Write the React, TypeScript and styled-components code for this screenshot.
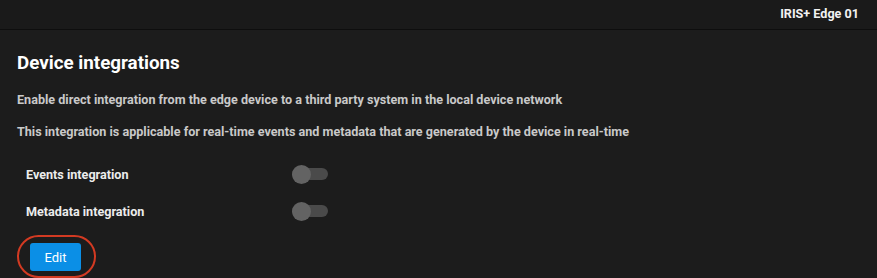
import React from "react";
import styled, { createGlobalStyle } from "styled-components";

const Global = createGlobalStyle`
  html, body { margin: 0; padding: 0; background: #1c1c1c; }
  body { font-family: Roboto, "Liberation Sans", sans-serif; }
`;

const Page = styled.div`
  width: 877px;
  height: 278px;
  background: #1c1c1c;
  display: flex;
  flex-direction: column;
  overflow: hidden;
`;

const TopBar = styled.header`
  height: 30px;
  background: #1a1a1a;
  border-bottom: 1px solid #0e0e0e;
  display: flex;
  align-items: center;
  justify-content: flex-end;
  padding: 0 18px 2px 0;
  box-sizing: border-box;
`;

const DeviceName = styled.span`
  color: #f2f2f2;
  font-size: 12.6px;
  font-weight: 700;
`;

const Content = styled.main`
  padding: 22px 17px 0;
  display: flex;
  flex-direction: column;
`;

const Title = styled.h1`
  margin: 0;
  font-size: 18.8px;
  line-height: 22px;
  font-weight: 700;
  color: #ffffff;
`;

const Description = styled.p<{ $top: number }>`
  margin: ${(p) => p.$top}px 0 0;
  font-size: 12.6px;
  line-height: 16px;
  font-weight: 700;
  color: #c9c9c9;
`;

const Settings = styled.div`
  margin-top: 25px;
  padding-left: 9px;
  display: flex;
  flex-direction: column;
  gap: 19px;
`;

const Row = styled.div`
  display: grid;
  grid-template-columns: 266px auto;
  align-items: center;
  height: 18px;
`;

const Label = styled.span`
  font-size: 12.6px;
  font-weight: 700;
  color: #ececec;
`;

const Switch = styled.span`
  position: relative;
  width: 36px;
  height: 12px;
  border-radius: 6px;
  background: #4a4a4a;
  &::after {
    content: "";
    position: absolute;
    left: 0;
    top: -3.5px;
    width: 19px;
    height: 19px;
    border-radius: 50%;
    background: #636363;
  }
`;

const Highlight = styled.div`
  margin-top: 15px;
  align-self: flex-start;
  border: 2px solid #d33a22;
  border-radius: 22px;
  padding: 6px 13px 5px 11px;
  display: flex;
`;

const EditButton = styled.button`
  width: 51px;
  height: 28px;
  border: none;
  border-radius: 3px;
  background: #0b8fe6;
  color: #ffffff;
  font-family: Roboto, "Liberation Sans", sans-serif;
  font-size: 13px;
  font-weight: 400;
  padding: 0;
`;

const settings = ["Events integration", "Metadata integration"];

export default function App() {
  return (
    <>
      <Global />
      <Page>
        <TopBar>
          <DeviceName>IRIS+ Edge 01</DeviceName>
        </TopBar>
        <Content>
          <Title>Device integrations</Title>
          <Description $top={18}>
            Enable direct integration from the edge device to a third party system in the local device network
          </Description>
          <Description $top={16}>
            This integration is applicable for real-time events and metadata that are generated by the device in real-time
          </Description>
          <Settings>
            {settings.map((s) => (
              <Row key={s}>
                <Label>{s}</Label>
                <Switch />
              </Row>
            ))}
          </Settings>
          <Highlight>
            <EditButton>Edit</EditButton>
          </Highlight>
        </Content>
      </Page>
    </>
  );
}
